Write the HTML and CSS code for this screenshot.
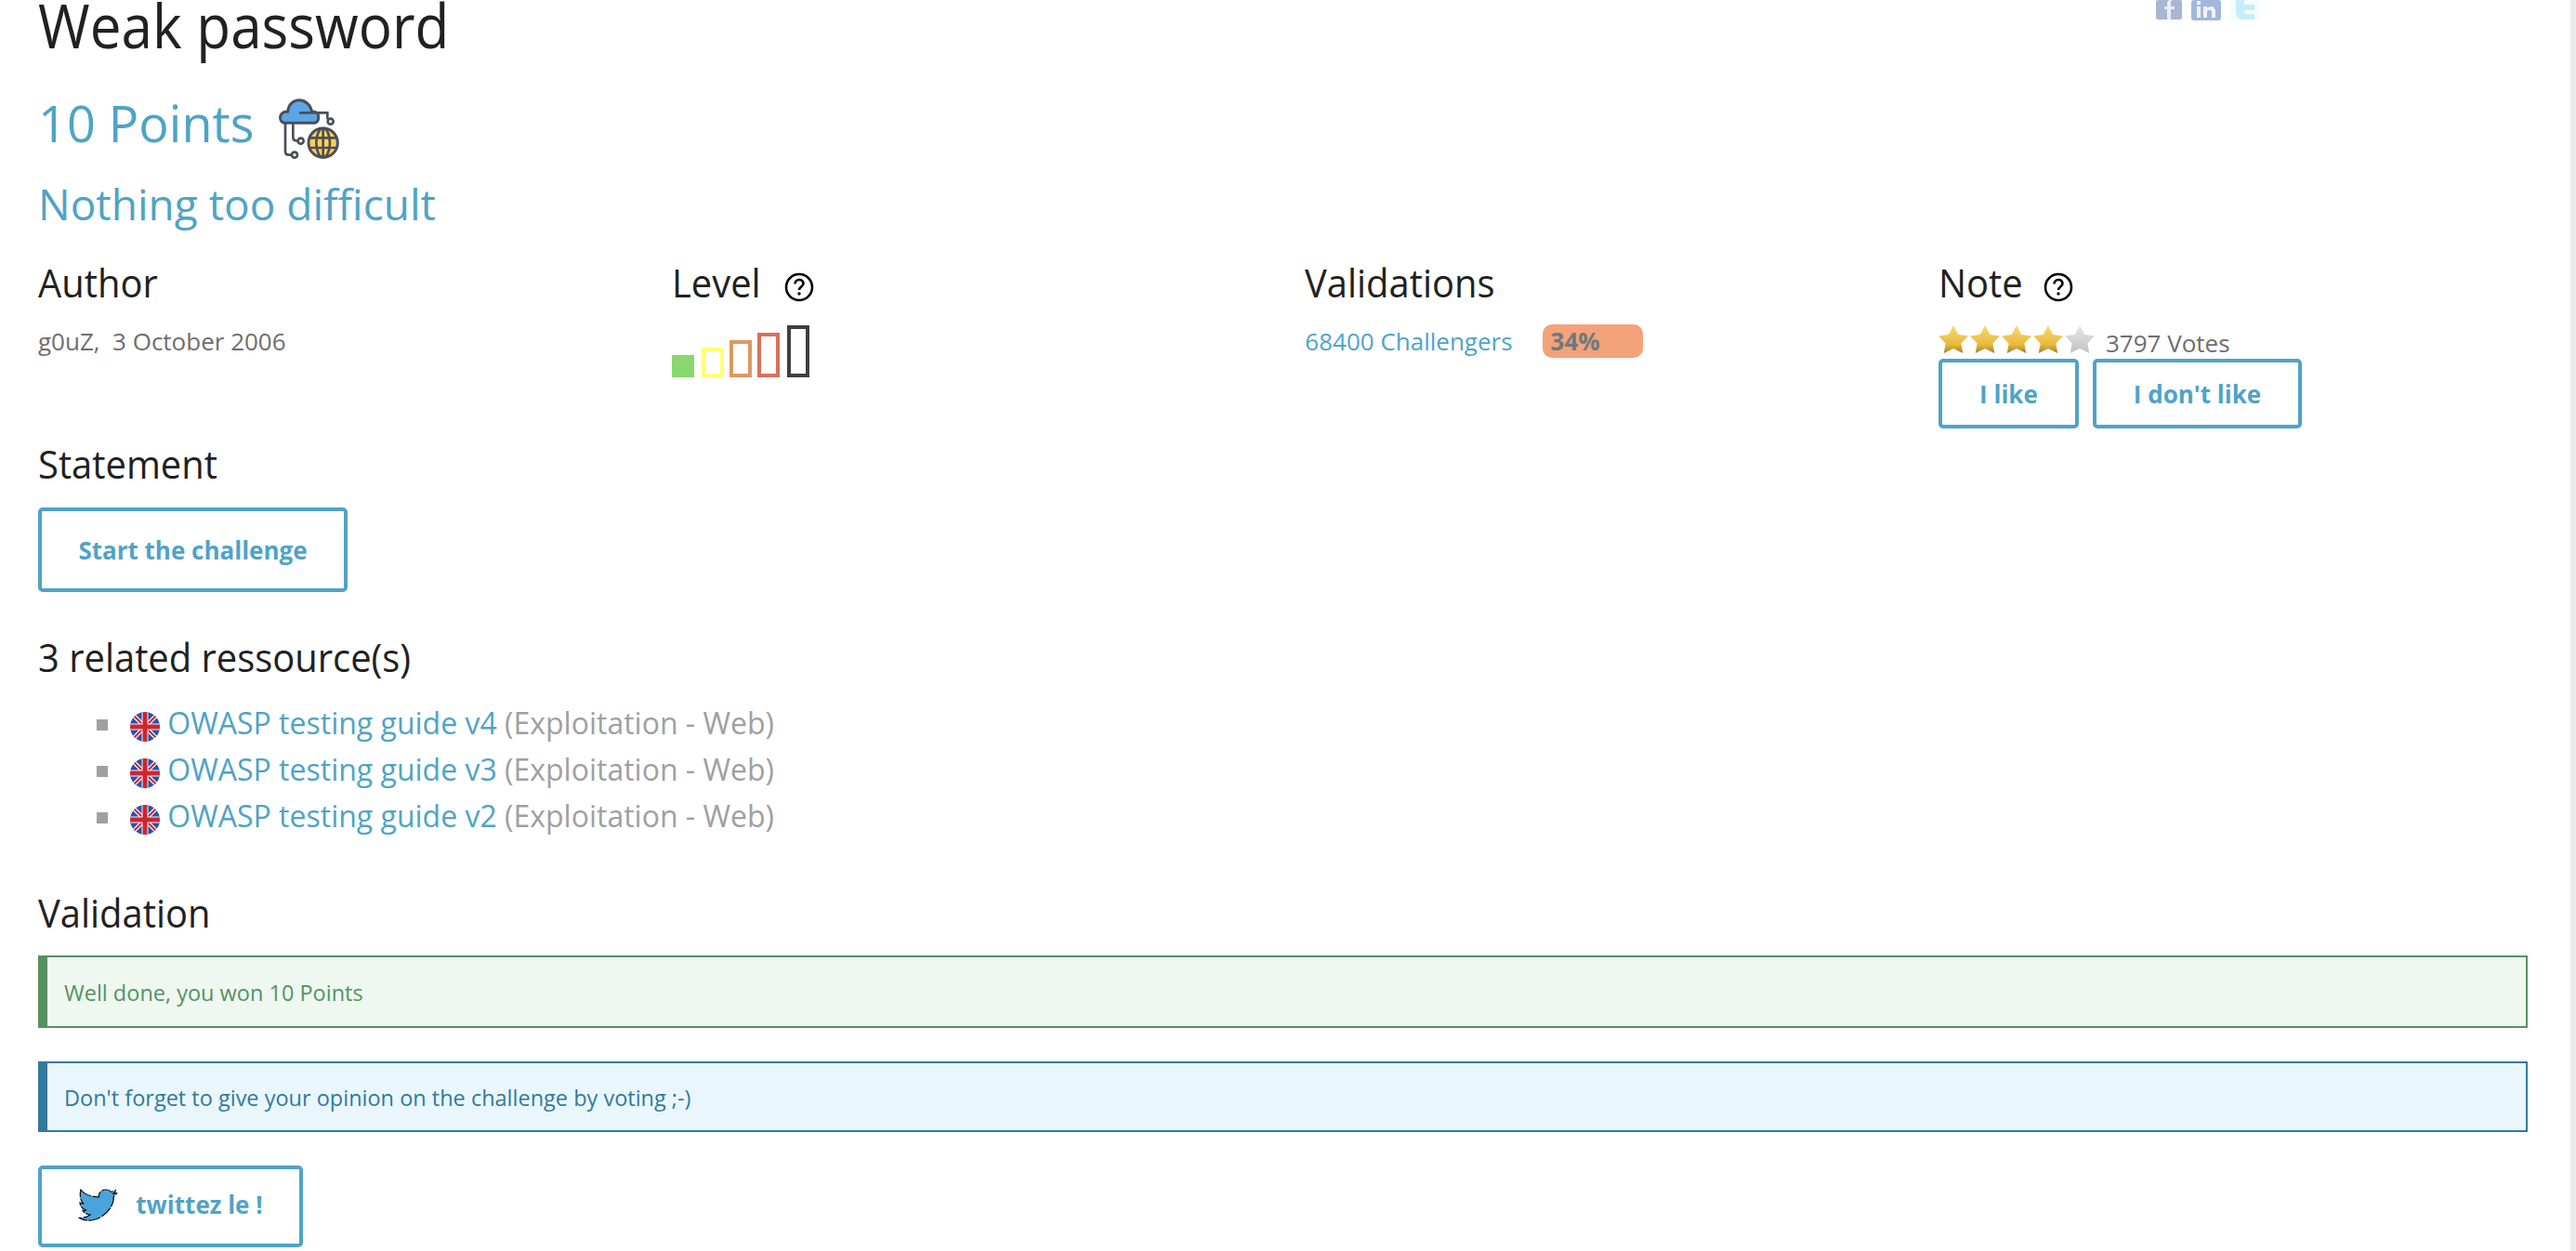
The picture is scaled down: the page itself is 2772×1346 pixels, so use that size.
FILE: index.html
```html
<!DOCTYPE html>
<html lang="en">
<head>
<meta charset="utf-8">
<title>Weak password</title>
<link rel="stylesheet" href="styles.css">
</head>
<body>
<svg class="defs" width="0" height="0" aria-hidden="true">
  <defs>
    <linearGradient id="gold" x1="0" y1="0" x2="0" y2="1"><stop offset="0" stop-color="#f8dc6e"/><stop offset=".7" stop-color="#e8b83f"/><stop offset="1" stop-color="#a87a20"/></linearGradient>
    <linearGradient id="grey" x1="0" y1="0" x2="0" y2="1"><stop offset="0" stop-color="#e6e6e6"/><stop offset="1" stop-color="#c2c2c2"/></linearGradient>
    <clipPath id="disc"><circle cx="16" cy="16" r="16"/></clipPath>
    <symbol id="star" viewBox="0 0 32 30"><path d="M16 0l5.200 10 10.800 1.600-7.600 8L26.200 30 16 25 5.800 30l1.800-10.400L0 11.600 10.800 10z"/></symbol>
    <symbol id="help" viewBox="0 0 32 32"><circle cx="16" cy="16" r="14" fill="none" stroke="#000" stroke-width="2.600"/><path d="M11.500 12.500c0-6 9-6 9-.5 0 3.500-4.500 3.500-4.500 7" fill="none" stroke="#000" stroke-width="2.600"/><circle cx="16" cy="23" r="1.700"/></symbol>
    <symbol id="flag" viewBox="0 0 32 32">
      <g clip-path="url(#disc)"><rect width="32" height="32" fill="#1f55b5"/><path d="M0 0l32 32M32 0L0 32" stroke="#f4f4f4" stroke-width="4.500"/><path d="M0 0l32 32M32 0L0 32" stroke="#cf2430" stroke-width="2"/><path d="M16 0v32M0 16h32" stroke="#f4f4f4" stroke-width="7"/><path d="M16 0v32M0 16h32" stroke="#cf2430" stroke-width="5"/></g>
    </symbol>
  </defs>
</svg>
<main class="page">
  <header class="title-row">
    <h1 class="title">Weak password</h1>
    <div class="social">
      <svg width="28" height="21" viewBox="0 0 28 21"><rect width="28" height="21" rx="2" fill="#a9b5d3"/><path d="M16 21V10h4V7h-4V3c0-2 1-3 3-3h-4c-2 0-3 2-3 4v3H9v3h3v11z" fill="#e9edf5"/></svg>
      <svg width="32" height="22" viewBox="0 0 32 22"><rect width="32" height="22" rx="3" fill="#a3b7dc"/><path d="M6 7h4v12H6zM6 1h4v4H6zM13 7h4v2c3-3 9-3 9 4v6h-4v-6c0-3-5-3-5 0v6h-4z" fill="#f0f3fa"/></svg>
      <svg width="32" height="22" viewBox="0 0 32 22"><rect width="32" height="22" fill="#f5fbfe"/><path d="M6 0h9v5h11v6H15c0 3 1 4 4 4h7v6H14c-5 0-8-3-8-8z" fill="#c5edfa"/></svg>
    </div>
  </header>
  <h2 class="points">10 Points
    <svg class="cat-icon" width="100" height="90" viewBox="0 0 300 270">
      <path d="M88 130H78c-22 0-22-32 0-36h8c4-50 68-50 78 0h10c16 4 14 36-2 36z" fill="#5aa7e6" stroke="#4b4f57" stroke-width="9" stroke-linejoin="round"/>
      <g fill="none" stroke="#4b4f57" stroke-width="8" stroke-linecap="round">
        <path d="M126 97h88v18"/><circle cx="224" cy="125" r="9"/>
        <path d="M103 132v45q0 10 10 10h5"/><circle cx="128" cy="188" r="9"/>
        <path d="M78 132v90q0 11 11 11h9"/><circle cx="108" cy="233" r="9"/>
      </g>
      <circle cx="200" cy="194" r="47" fill="#fdcf58" stroke="#4b4f57" stroke-width="9"/>
      <g fill="none" stroke="#4b4f57" stroke-width="8">
        <ellipse cx="200" cy="194" rx="22" ry="47"/><path d="M200 147v94M156 178h88M156 210h88"/>
      </g>
    </svg>
  </h2>
  <h2 class="subtitle">Nothing too difficult</h2>

  <section class="meta">
    <div class="meta-col">
      <h3 class="heading"><span class="heading-text">Author</span></h3>
      <p class="meta-text">g0uZ,&nbsp; 3 October 2006</p>
    </div>
    <div class="meta-col">
      <h3 class="heading"><span class="heading-text">Level</span> <svg class="help help-level" width="32" height="32"><use href="#help"/></svg></h3>
      <div class="level">
        <span class="bar bar-1"></span><span class="bar bar-2"></span><span class="bar bar-3"></span><span class="bar bar-4"></span><span class="bar bar-5"></span>
      </div>
    </div>
    <div class="meta-col">
      <h3 class="heading"><span class="heading-text">Validations</span></h3>
      <p class="meta-text"><a class="link" href="#">68400 Challengers</a><span class="badge">34%</span></p>
    </div>
    <div class="meta-col">
      <h3 class="heading"><span class="heading-text">Note</span> <svg class="help" width="32" height="32"><use href="#help"/></svg></h3>
      <div class="rating">
        <svg class="star gold" width="32" height="30"><use href="#star"/></svg><svg class="star gold" width="32" height="30"><use href="#star"/></svg><svg class="star gold" width="32" height="30"><use href="#star"/></svg><svg class="star gold" width="32" height="30"><use href="#star"/></svg><svg class="star grey" width="32" height="30"><use href="#star"/></svg>
        <span class="votes">3797 Votes</span>
      </div>
      <div class="btn-row">
        <a class="btn btn-like" href="#">I like</a>
        <a class="btn btn-dislike" href="#">I don't like</a>
      </div>
    </div>
  </section>

  <h3 class="heading"><span class="heading-text">Statement</span></h3>
  <a class="btn btn-lg" href="#">Start the challenge</a>

  <h3 class="heading related"><span class="heading-text">3 related ressource(s)</span></h3>
  <ul class="resources">
    <li><svg class="flag" width="32" height="32"><use href="#flag"/></svg> <a class="link" href="#">OWASP testing guide v4</a> (Exploitation - Web)</li>
    <li><svg class="flag" width="32" height="32"><use href="#flag"/></svg> <a class="link" href="#">OWASP testing guide v3</a> (Exploitation - Web)</li>
    <li><svg class="flag" width="32" height="32"><use href="#flag"/></svg> <a class="link" href="#">OWASP testing guide v2</a> (Exploitation - Web)</li>
  </ul>

  <h3 class="heading validation"><span class="heading-text">Validation</span></h3>
  <div class="alert alert-success">Well done, you won 10 Points</div>
  <div class="alert alert-info">Don't forget to give your opinion on the challenge by voting ;-)</div>
  <a class="btn btn-tw" href="#">
    <svg class="bird" width="48" height="40" viewBox="0 0 144 114"><path d="M9 3c10 14 28 22 58 24-2-14 10-25 24-24 7 0 12 3 16 7 5-1 12-3 15-6-2 5-4 9-8 12 4 0 8-1 12-3-3 4-6 8-11 11 2 32-28 72-72 78-16 2-29-1-41-8 14 1 27-2 37-10-12-1-19-6-24-14 4 1 8 1 11-1-12-3-20-13-20-24 3 2 7 3 11 3C7 38 4 20 9 3z" fill="#4ba3dc" stroke="#0a0a0a" stroke-width="3.500" stroke-dasharray="40 4"/></svg>
    <span class="tw-label">twittez le !</span>
  </a>
</main>
</body>
</html>
```
FILE: styles.css
```css
* { box-sizing: border-box; }
html, body { margin: 0; height: 100%; overflow: hidden; background: #fff; }
body { font-family: "Open Sans", "Liberation Sans", sans-serif; color: #212121; border-right: 6px solid #ebebeb; }
.defs { position: absolute; }
.page { margin-top: -18px; padding: 0 46px 0 41px; }
.title-row { display: flex; justify-content: space-between; align-items: flex-start; height: 88px; }
.title { margin: 0; font-size: 66px; font-weight: 400; line-height: 88px; transform: scaleX(.913); transform-origin: 0 50%; }
.social { display: flex; gap: 10px; margin: 18px 288px 0 0; height: 22px; }
.points { margin: 27px 0 0; font-size: 54px; font-weight: 400; line-height: 70px; color: #4fa3c7; display: flex; align-items: center; gap: 8px; height: 70px; }
.cat-icon { flex: none; margin-top: -8px; margin-bottom: -12px; }
.subtitle { margin: 20px 0 0; font-size: 46px; font-weight: 400; line-height: 64px; color: #4fa3c7; }
.meta { display: grid; grid-template-columns: repeat(4, 681.67px); margin-top: 27px; height: 195px; }
.heading { margin: 0; font-size: 42px; font-weight: 400; line-height: 52px; }
.heading-text { display: inline-block; transform: scaleX(.95); transform-origin: 0 50%; }
.help { vertical-align: -5px; margin-left: 7px; }
.help-level { margin-left: 10px; }
.meta-text { margin: 19px 0 0; font-size: 26px; line-height: 36px; color: #6e6e6e; }
.link { color: #4fa3c7; text-decoration: none; }
.badge { display: inline-block; margin-left: 32px; width: 108px; height: 36px; padding-left: 9px; border-radius: 10px; background: #f3a27a; color: #6f7a7c; font-weight: 700; line-height: 36px; vertical-align: top; }
.level { display: flex; align-items: flex-end; height: 56px; margin-top: 20px; }
.bar { display: block; width: 24px; border: 4px solid; margin-right: 6px; }
.bar-1 { height: 24px; background: #88d86d; border-color: #88d86d; margin-right: 8px; }
.bar-2 { height: 32px; border-color: #ffff7a; }
.bar-3 { height: 40px; border-color: #dc9860; }
.bar-4 { height: 48px; border-color: #d9705a; margin-right: 8px; }
.bar-5 { height: 56px; border-color: #3f3f3f; }
.rating { display: flex; align-items: flex-end; gap: 2px; height: 30px; margin-top: 20px; }
.star { display: block; flex: none; }
.gold { fill: url(#gold); }
.grey { fill: url(#grey); }
.votes { margin: 0 0 -7px 10px; font-size: 26px; line-height: 36px; color: #6e6e6e; }
.btn-row { display: flex; gap: 15px; margin-top: 6px; }
.btn { display: inline-flex; align-items: center; justify-content: center; border: 4px solid #4fa3c7; border-radius: 5px; color: #4fa3c7; font-weight: 700; font-size: 26px; text-decoration: none; background: #fff; }
.btn-like { width: 151px; height: 75px; }
.btn-dislike { width: 225px; height: 75px; }
.btn-lg { display: flex; width: 333px; height: 91px; margin-top: 21px; }
.related { margin-top: 44px; }
.resources { list-style: none; margin: 20px 0 0; padding: 0 0 0 63px; font-size: 32px; line-height: 50px; color: #a0a0a0; }
.resources li::before { content: ""; display: inline-block; width: 12px; height: 12px; margin-right: 24px; background: #a0a0a0; vertical-align: 4px; }
.flag { vertical-align: -8px; }
.validation { margin-top: 53px; }
.alert { display: flex; align-items: center; font-size: 23.5px; padding: 2px 0 0 18px; border: 2px solid; border-left-width: 10px; }
.alert-success { height: 78px; margin-top: 20px; color: #559261; border-color: #559261; background: #eef7f0; }
.alert-info { height: 76px; margin-top: 36px; color: #33799e; border-color: #33799e; background: #e9f6fc; }
.btn-tw { display: flex; gap: 14px; width: 285px; height: 88px; margin-top: 36px; }
.tw-label { margin-bottom: 5px; }
```
